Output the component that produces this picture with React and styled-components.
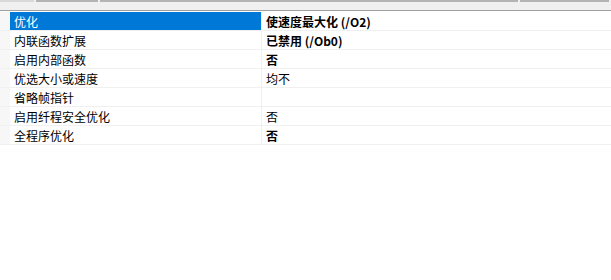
import styled, { createGlobalStyle } from "styled-components";

const GlobalStyle = createGlobalStyle`
  html, body {
    margin: 0;
    padding: 0;
    background: #ffffff;
  }
  body {
    font-family: "Noto Sans CJK SC", "Microsoft YaHei", sans-serif;
    font-size: 12px;
    color: #000;
  }
`;

const rows = [
  { name: "优化", value: "使速度最大化 (/O2)", bold: true, selected: true },
  { name: "内联函数扩展", value: "已禁用 (/Ob0)", bold: true },
  { name: "启用内部函数", value: "否", bold: true },
  { name: "优选大小或速度", value: "均不" },
  { name: "省略帧指针", value: "" },
  { name: "启用纤程安全优化", value: "否" },
  { name: "全程序优化", value: "否", bold: true },
];

const App = () => {
  return (
    <Page>
      <GlobalStyle />
      <TopBar>
        <TopSeg $w={36} />
        <TopSeg $w={64} $dark />
        <TopSeg $w={420} $dark />
        <TopSeg $w={91} $dark />
      </TopBar>
      <Grid>
        {rows.map((r) => (
          <Row key={r.name}>
            <Gutter />
            <NameCell $selected={r.selected}>{r.name}</NameCell>
            <ValueCell $bold={r.bold}>{r.value}</ValueCell>
          </Row>
        ))}
      </Grid>
    </Page>
  );
};

export default App;

const Page = styled.div`
  width: 611px;
  height: 280px;
  background: #ffffff;
  overflow: hidden;
`;

const TopBar = styled.div`
  display: flex;
  height: 11px;
  background: #f0f0f0;
  border-bottom: 1px solid #a0a0a0;
  box-sizing: border-box;
`;

const TopSeg = styled.div`
  width: ${({ $w }) => $w}px;
  height: 2px;
  background: ${({ $dark }) => ($dark ? "#b4b4b4" : "#d8d8d8")};
  border-right: 2px solid #f0f0f0;
  box-sizing: border-box;
`;

const Grid = styled.div`
  display: flex;
  flex-direction: column;
  padding-top: 1px;
`;

const Row = styled.div`
  display: grid;
  grid-template-columns: 10px 252px 1fr;
  height: 19px;
  border-bottom: 1px solid #f0f0f0;
  box-sizing: border-box;
`;

const Gutter = styled.div`
  background: #f7f7f7;
`;

const NameCell = styled.div`
  display: flex;
  align-items: center;
  padding-left: 4px;
  background: ${({ $selected }) => ($selected ? "#0078d7" : "#ffffff")};
  color: ${({ $selected }) => ($selected ? "#ffffff" : "#000000")};
  border-right: 1px solid #f0f0f0;
  white-space: nowrap;
`;

const ValueCell = styled.div`
  display: flex;
  align-items: center;
  padding-left: 4px;
  font-weight: ${({ $bold }) => ($bold ? 700 : 400)};
  white-space: nowrap;
`;
